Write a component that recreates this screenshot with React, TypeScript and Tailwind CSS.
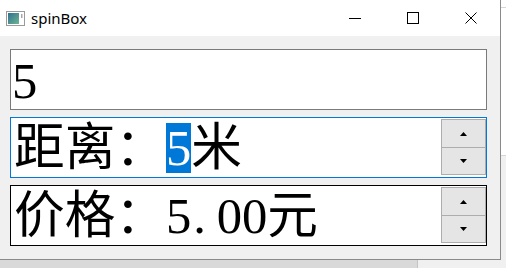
import React from "react";

const fieldFont = "font-['Liberation_Serif','Noto_Sans_CJK_SC',serif]";

function UpArrow() {
  return (
    <svg width="7" height="4" viewBox="0 0 7 4">
      <polygon points="0,4 3.5,0 7,4" fill="#000" />
    </svg>
  );
}

function DownArrow() {
  return (
    <svg width="7" height="4" viewBox="0 0 7 4">
      <polygon points="0,0 7,0 3.5,4" fill="#000" />
    </svg>
  );
}

function SpinButtons() {
  return (
    <div className="mt-[1px] flex h-[56px] w-[45px] shrink-0 flex-col self-start">
      <div className="flex h-[29px] items-center justify-center border border-[#adadad] bg-[#e5e5e5]">
        <UpArrow />
      </div>
      <div className="flex h-[27px] items-center justify-center border border-t-0 border-[#adadad] bg-[#e5e5e5]">
        <DownArrow />
      </div>
    </div>
  );
}

function AppIcon() {
  return (
    <svg width="19" height="15" viewBox="0 0 19 15">
      <defs>
        <linearGradient id="ig" x1="0" y1="0" x2="1" y2="1">
          <stop offset="0" stopColor="#2f6f95" />
          <stop offset="1" stopColor="#6fb58f" />
        </linearGradient>
      </defs>
      <rect x="0.5" y="0.5" width="18" height="14" fill="#ffffff" stroke="#9a9a9a" />
      <rect x="2" y="2" width="11" height="11" fill="url(#ig)" />
      <rect x="15" y="3" width="1.5" height="4" fill="#a8a8a8" />
    </svg>
  );
}

export default function App() {
  return (
    <div className="flex h-[268px] w-[506px] flex-col overflow-hidden bg-white">
      <div className="flex h-[260px]">
        {/* window */}
        <div className="flex h-[260px] w-[501px] flex-col border-r border-b border-[#8a8a8a]">
          {/* title bar */}
          <div className="flex h-[36px] items-center bg-white">
            <div className="ml-[6px] flex items-center">
              <AppIcon />
            </div>
            <span className="ml-[6px] font-['Noto_Sans',sans-serif] text-[15px] leading-none text-black">
              spinBox
            </span>
            <div className="ml-auto flex h-full">
              <div className="flex h-full w-[58px] items-center justify-center">
                <div className="h-[1px] w-[12px] bg-black" />
              </div>
              <div className="flex h-full w-[58px] items-center justify-center">
                <div className="h-[12px] w-[12px] border border-black" />
              </div>
              <div className="flex h-full w-[58px] items-center justify-center">
                <svg width="12" height="12" viewBox="0 0 12 12">
                  <path d="M0.5 0.5 L11.5 11.5 M11.5 0.5 L0.5 11.5" stroke="#000" strokeWidth="1" />
                </svg>
              </div>
            </div>
          </div>
          {/* body */}
          <div className="flex flex-1 flex-col gap-[7px] bg-[#f0f0f0] pt-[13px] pr-[13px] pl-[10px]">
            <div className="flex h-[61px] border border-[#7a7a7a] bg-white">
              <div className={`flex flex-1 items-center pl-[1px] pt-[2px] text-[50.67px] leading-[50px] whitespace-nowrap text-black ${fieldFont}`}>
                <span>5</span>
              </div>
            </div>
            <div className="flex h-[61px] border border-[#0078d7] bg-white">
              <div className={`flex flex-1 items-center pl-[3px] text-[50.67px] leading-[50px] whitespace-nowrap text-black ${fieldFont}`}>
                <span>
                  距离：
                  <span className="inline-block h-[50px] bg-[#0078d7] leading-[50px] text-white">5</span>
                  米
                </span>
              </div>
              <SpinButtons />
            </div>
            <div className="flex h-[61px] border border-black bg-white">
              <div className={`flex flex-1 items-center pl-[3px] text-[50.67px] leading-[50px] whitespace-nowrap text-black ${fieldFont}`}>
                <span>
                  价格：5
                  <span className="inline-block w-[25.33px] pl-[2px]">.</span>
                  00元
                </span>
              </div>
              <SpinButtons />
            </div>
          </div>
        </div>
        {/* desktop strip on the right */}
        <div className="flex flex-1 flex-col">
          <div className="h-[7px] bg-white" />
          <div className="h-[148px] border-t border-[#d6d6d6] bg-white" />
          <div className="flex-1 border-t border-[#d6d6d6] bg-[#f0f0f0]" />
        </div>
      </div>
      <div className="flex h-[8px]">
        <div className="w-[418px] border-r border-[#c4c4c4] bg-[#d9d9d9]" />
        <div className="flex-1 bg-[#f0f0f0]" />
      </div>
    </div>
  );
}
